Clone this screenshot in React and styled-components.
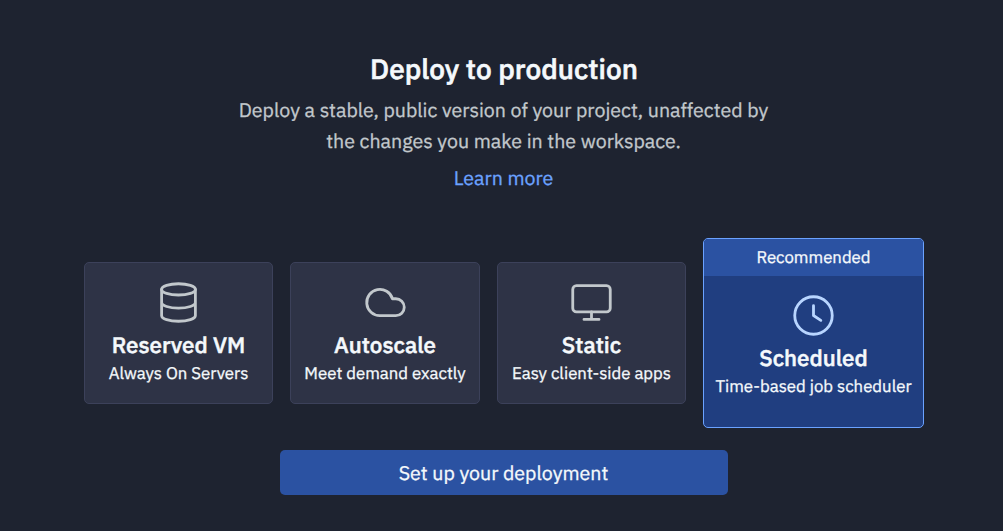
import React from "react";
import styled, { createGlobalStyle } from "styled-components";

const GlobalStyle = createGlobalStyle`
  * { box-sizing: border-box; }
  body {
    margin: 0;
    background: #1e2330;
    color: #f5f9fc;
    font-family: "IBM Plex Sans", Roboto, "Liberation Sans", sans-serif;
    text-rendering: geometricPrecision;
    -webkit-text-stroke: 0.3px;
  }
`;

const Page = styled.main`
  width: 1003px;
  height: 531px;
  padding: 50px 0 0 5px;
  display: flex;
  flex-direction: column;
  align-items: center;
  background: #1e2330;
`;

const Title = styled.h1`
  margin: 0;
  font-size: 28px;
  font-weight: 500;
  line-height: 38px;
  -webkit-text-stroke: 0.6px;
`;

const Lead = styled.p`
  width: 560px;
  margin: 7px 1px 0 0;
  color: #c2c8cc;
  font-size: 19.6px;
  line-height: 31px;
  text-align: center;
`;

const Link = styled.a`
  margin: 6px 1px 0 0;
  color: #6ba2ff;
  font-size: 19.6px;
  line-height: 31px;
`;

const Options = styled.div`
  width: 840px;
  height: 190px;
  margin: 44px 0 0;
  display: flex;
  align-items: center;
  gap: 17px;
`;

const Card = styled.section`
  flex: 0 0 ${(p) => p.$width}px;
  height: ${(p) => (p.$active ? 190 : 142)}px;
  display: flex;
  flex-direction: column;
  border: 1px solid ${(p) => (p.$active ? "#6ba2ff" : "#3c415a")};
  border-radius: 5px;
  overflow: hidden;
  background: ${(p) => (p.$active ? "#203e80" : "#2e3346")};
`;

const Banner = styled.div`
  height: 37px;
  background: #2b52a2;
  text-align: center;
  font-size: 16.8px;
  line-height: 37px;
`;

const CardBody = styled.div`
  padding-top: 17px;
  display: flex;
  flex-direction: column;
  align-items: center;
  white-space: nowrap;
`;

const Icon = styled.svg`
  width: 45px;
  height: 45px;
  fill: none;
  stroke: ${(p) => (p.$active ? "#b8d5ff" : "#c2c8cc")};
  stroke-width: 1.5;
  stroke-linecap: round;
  stroke-linejoin: round;
`;

const CardTitle = styled.h2`
  margin: 6px 0 0;
  font-size: 22.4px;
  font-weight: 500;
  line-height: 30px;
  -webkit-text-stroke: 0.5px;
`;

const CardText = styled.p`
  margin: -1px 0 0;
  font-size: 16.8px;
  line-height: 26px;
`;

const Button = styled.button`
  width: 448px;
  height: 45px;
  margin: 22px 0 0;
  padding: 2px 1px 0 0;
  border: 0;
  border-radius: 5px;
  background: #2b52a2;
  color: #f5f9fc;
  font: 400 19.6px/43px "IBM Plex Sans", Roboto, "Liberation Sans", sans-serif;
  text-rendering: geometricPrecision;
`;

const options = [
  {
    name: "Reserved VM", text: "Always On Servers", width: 189,
    icon: (
      <>
        <ellipse cx="12" cy="5" rx="9" ry="3" />
        <path d="M3 5v14a9 3 0 0 0 18 0V5M3 12a9 3 0 0 0 18 0" />
      </>
    ),
  },
  {
    name: "Autoscale", text: "Meet demand exactly", width: 190,
    icon: <path d="M17.5 19H9a7 7 0 1 1 6.71-9h1.79a4.5 4.5 0 1 1 0 9Z" />,
  },
  {
    name: "Static", text: "Easy client-side apps", width: 189,
    icon: (
      <>
        <rect x="2" y="3" width="20" height="14" rx="2" />
        <path d="M12 17v4M8 21h8" />
      </>
    ),
  },
  {
    name: "Scheduled", text: "Time-based job scheduler", width: 221,
    active: true,
    icon: (
      <>
        <circle cx="12" cy="12" r="10" />
        <path d="M12 6.75V12l3.9 2.6" />
      </>
    ),
  },
];

function Option({ option }) {
  return (
    <Card $width={option.width} $active={option.active}>
      {option.active && <Banner>Recommended</Banner>}
      <CardBody>
        <Icon viewBox="0 0 24 24" $active={option.active}>{option.icon}</Icon>
        <CardTitle>{option.name}</CardTitle>
        <CardText>{option.text}</CardText>
      </CardBody>
    </Card>
  );
}

export default function App() {
  return (
    <>
      <GlobalStyle />
      <Page>
        <Title>Deploy to production</Title>
        <Lead>
          Deploy a stable, public version of your project, unaffected by
          the changes you make in the workspace.
        </Lead>
        <Link>Learn more</Link>
        <Options>
          {options.map((o) => <Option key={o.name} option={o} />)}
        </Options>
        <Button>Set up your deployment</Button>
      </Page>
    </>
  );
}
